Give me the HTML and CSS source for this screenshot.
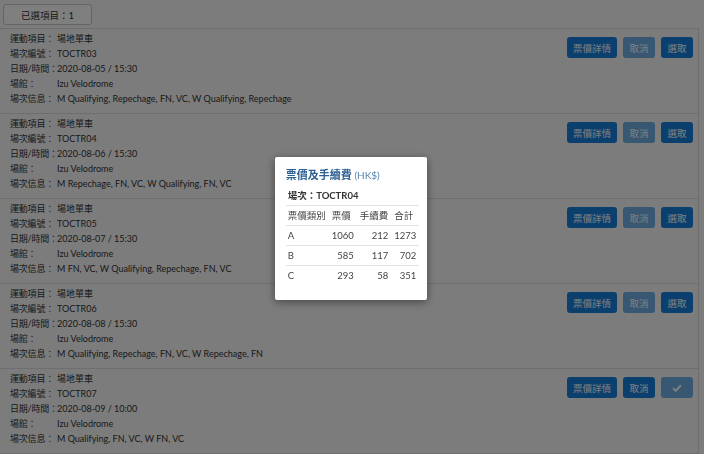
FILE: index.html
```html
<!DOCTYPE html>
<html lang="zh-Hant">
<head>
    <meta charset="UTF-8">
    <title>場次選擇</title>
    <link rel="stylesheet" href="styles.css">
</head>
<body>
    <div class="topbar">
        <button class="selected-btn">已選項目：1</button>
    </div>

    <div class="event-list">
        <div class="event-item">
            <div class="event-info">
                <div class="info-row"><span class="info-label">運動項目：</span><span>場地單車</span></div>
                <div class="info-row"><span class="info-label">場次編號：</span><span>TOCTR03</span></div>
                <div class="info-row"><span class="info-label">日期/時間：</span><span>2020-08-05 / 15:30</span></div>
                <div class="info-row"><span class="info-label">場館：</span><span>Izu Velodrome</span></div>
                <div class="info-row"><span class="info-label">場次信息：</span><span>M Qualifying, Repechage, FN, VC, W Qualifying, Repechage</span></div>
            </div>
            <div class="event-actions">
                <button class="btn">票價詳情</button>
                <button class="btn" disabled>取消</button>
                <button class="btn">選取</button>
            </div>
        </div>

        <div class="event-item">
            <div class="event-info">
                <div class="info-row"><span class="info-label">運動項目：</span><span>場地單車</span></div>
                <div class="info-row"><span class="info-label">場次編號：</span><span>TOCTR04</span></div>
                <div class="info-row"><span class="info-label">日期/時間：</span><span>2020-08-06 / 15:30</span></div>
                <div class="info-row"><span class="info-label">場館：</span><span>Izu Velodrome</span></div>
                <div class="info-row"><span class="info-label">場次信息：</span><span>M Repechage, FN, VC, W Qualifying, FN, VC</span></div>
            </div>
            <div class="event-actions">
                <button class="btn">票價詳情</button>
                <button class="btn" disabled>取消</button>
                <button class="btn">選取</button>
            </div>
        </div>

        <div class="event-item">
            <div class="event-info">
                <div class="info-row"><span class="info-label">運動項目：</span><span>場地單車</span></div>
                <div class="info-row"><span class="info-label">場次編號：</span><span>TOCTR05</span></div>
                <div class="info-row"><span class="info-label">日期/時間：</span><span>2020-08-07 / 15:30</span></div>
                <div class="info-row"><span class="info-label">場館：</span><span>Izu Velodrome</span></div>
                <div class="info-row"><span class="info-label">場次信息：</span><span>M FN, VC, W Qualifying, Repechage, FN, VC</span></div>
            </div>
            <div class="event-actions">
                <button class="btn">票價詳情</button>
                <button class="btn" disabled>取消</button>
                <button class="btn">選取</button>
            </div>
        </div>

        <div class="event-item">
            <div class="event-info">
                <div class="info-row"><span class="info-label">運動項目：</span><span>場地單車</span></div>
                <div class="info-row"><span class="info-label">場次編號：</span><span>TOCTR06</span></div>
                <div class="info-row"><span class="info-label">日期/時間：</span><span>2020-08-08 / 15:30</span></div>
                <div class="info-row"><span class="info-label">場館：</span><span>Izu Velodrome</span></div>
                <div class="info-row"><span class="info-label">場次信息：</span><span>M Qualifying, Repechage, FN, VC, W Repechage, FN</span></div>
            </div>
            <div class="event-actions">
                <button class="btn">票價詳情</button>
                <button class="btn" disabled>取消</button>
                <button class="btn">選取</button>
            </div>
        </div>

        <div class="event-item">
            <div class="event-info">
                <div class="info-row"><span class="info-label">運動項目：</span><span>場地單車</span></div>
                <div class="info-row"><span class="info-label">場次編號：</span><span>TOCTR07</span></div>
                <div class="info-row"><span class="info-label">日期/時間：</span><span>2020-08-09 / 10:00</span></div>
                <div class="info-row"><span class="info-label">場館：</span><span>Izu Velodrome</span></div>
                <div class="info-row"><span class="info-label">場次信息：</span><span>M Qualifying, FN, VC, W FN, VC</span></div>
            </div>
            <div class="event-actions">
                <button class="btn">票價詳情</button>
                <button class="btn">取消</button>
                <button class="btn btn-check" disabled>
                    <svg width="10" height="8" viewBox="0 0 10 8"><path d="M1 4.2 L3.8 6.8 L9 1.3" fill="none" stroke="#fff" stroke-width="2"/></svg>
                </button>
            </div>
        </div>
    </div>

    <div class="overlay">
        <div class="price-modal">
            <h4 class="modal-title">票價及手續費 <small>(HK$)</small></h4>
            <div class="modal-session">場次：TOCTR04</div>
            <table class="price-table">
                <thead>
                    <tr>
                        <th>票價類別</th>
                        <th>票價</th>
                        <th>手續費</th>
                        <th>合計</th>
                    </tr>
                </thead>
                <tbody>
                    <tr><td>A</td><td>1060</td><td>212</td><td>1273</td></tr>
                    <tr><td>B</td><td>585</td><td>117</td><td>702</td></tr>
                    <tr><td>C</td><td>293</td><td>58</td><td>351</td></tr>
                </tbody>
            </table>
        </div>
    </div>
</body>
</html>
```

FILE: styles.css
```css
body { margin: 0; background: #f9f9f9; color: #333; font-family: Lato, "Noto Sans CJK TC", sans-serif; font-size: 9px; }
button { font-family: inherit; }

.topbar { height: 28px; padding: 4px 0 0 3px; box-sizing: border-box; }
.selected-btn { width: 89px; height: 21px; background: #fff; border: 1px solid #c8c8c8; border-radius: 3px; font-size: 9.5px; color: #333; padding: 0; }

.event-list { width: 699px; border-top: 1px solid #ddd; border-right: 1px solid #ddd; box-sizing: border-box; }
.event-item { display: flex; justify-content: space-between; align-items: flex-start; padding: 2px 5px 7px 10px; border-bottom: 1px solid #ddd; }
.info-row { line-height: 15px; white-space: nowrap; }
.info-label { display: inline-block; width: 47px; font-size: 9px; letter-spacing: -.2px; }

.event-actions { display: flex; gap: 6px; margin-top: 6px; }
.btn { height: 21px; min-width: 32px; padding: 0 6px; border: none; border-radius: 3px; background: #167fdc; color: #fff; font-size: 9.5px; }
.btn:disabled { opacity: .6; }
.btn-check { display: flex; align-items: center; justify-content: center; }

.overlay { position: fixed; inset: 0; background: rgba(0, 0, 0, .5); display: flex; align-items: center; justify-content: center; }
.price-modal { background: #fff; border-radius: 2px; padding: 11px 8px 15px 11px; box-shadow: 0 2px 8px rgba(0, 0, 0, .45); margin: 3px 0 0 -2px; }
.modal-title { margin: 0; font-size: 11px; line-height: 14px; color: #2c5f92; font-weight: bold; }
.modal-title small { font-size: 10px; font-weight: normal; color: #5683b0; }
.modal-session { margin-top: 7px; padding: 0 2px 2px; line-height: 14px; font-size: 9.5px; font-weight: bold; color: #333; border-bottom: 1px solid #e2e2e2; }

.price-table { border-collapse: collapse; color: #444; font-size: 9.5px; }
.price-table th, .price-table td { padding: 4px 3px; line-height: 11px; border-bottom: 1px solid #e2e2e2; white-space: nowrap; }
.price-table th { text-align: left; font-weight: normal; }
.price-table td { text-align: right; }
.price-table th:first-child, .price-table td:first-child { padding-left: 2px; text-align: left; }
.price-table tbody tr:last-child td { border-bottom: none; }
```
